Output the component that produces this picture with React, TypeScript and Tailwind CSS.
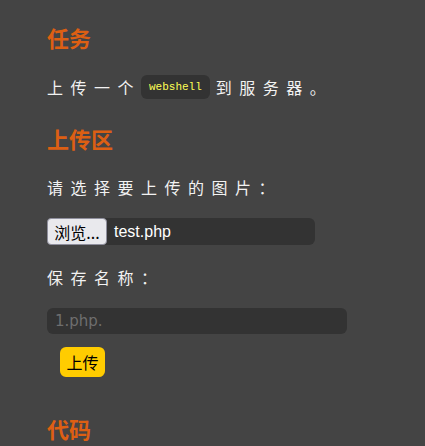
import React from 'react';

const cjk = "font-['Noto_Sans_CJK_SC','Noto_Sans',sans-serif]";

const Heading = ({ children, className = '' }: { children: React.ReactNode; className?: string }) => (
  <h2 className={`h-[30px] leading-[30px] text-[22px] font-bold text-[#dd5f13] ${cjk} ${className}`}>{children}</h2>
);

const Line = ({ children, className = '' }: { children: React.ReactNode; className?: string }) => (
  <p className={`h-[24px] leading-[24px] text-[16px] tracking-[7.5px] text-[#f2f2f2] ${cjk} ${className}`}>{children}</p>
);

export default function App() {
  return (
    <div className="min-h-[446px] w-full bg-[#444444] pl-[47px] pt-[22px] overflow-hidden">
      {/* 任务 */}
      <Heading>任务</Heading>
      <Line className="mt-[23px] flex items-center">
        上传一个
        <code className="mr-[6px] inline-flex h-[24px] items-center rounded-[6px] bg-[#333333] px-[8px] font-['Liberation_Mono','DejaVu_Sans_Mono',monospace] text-[11px] font-normal tracking-normal text-[#ffff55]">
          webshell
        </code>
        到服务器。
      </Line>

      {/* 上传区 */}
      <Heading className="mt-[24px]">上传区</Heading>
      <Line className="mt-[22px]">请选择要上传的图片：</Line>
      <div className="mt-[19px] flex h-[27px] w-[268px] items-center rounded-[6px] bg-[#333333]">
        <button className={`h-[27px] w-[60px] rounded-[4px] border border-[#8f8f9d] bg-[#e9e9ed] text-[16px] leading-none text-black ${cjk}`}>
          浏览...
        </button>
        <span className="ml-[7px] font-['Liberation_Sans',Arial,sans-serif] text-[16px] text-white">test.php</span>
      </div>
      <Line className="mt-[20px]">保存名称：</Line>
      <input
        className="mt-[19px] block h-[26px] w-[300px] rounded-[6px] bg-[#333333] px-[8px] font-['DejaVu_Sans',sans-serif] text-[15px] text-white outline-none placeholder:text-[#6e6e6e]"
        placeholder="1.php."
      />
      <button className={`ml-[13px] mt-[13px] block h-[30px] w-[45px] rounded-[6px] bg-[#ffcc00] text-[16px] text-black ${cjk}`}>
        上传
      </button>

      {/* 代码 */}
      <Heading className="mt-[36px]">代码</Heading>
    </div>
  );
}
